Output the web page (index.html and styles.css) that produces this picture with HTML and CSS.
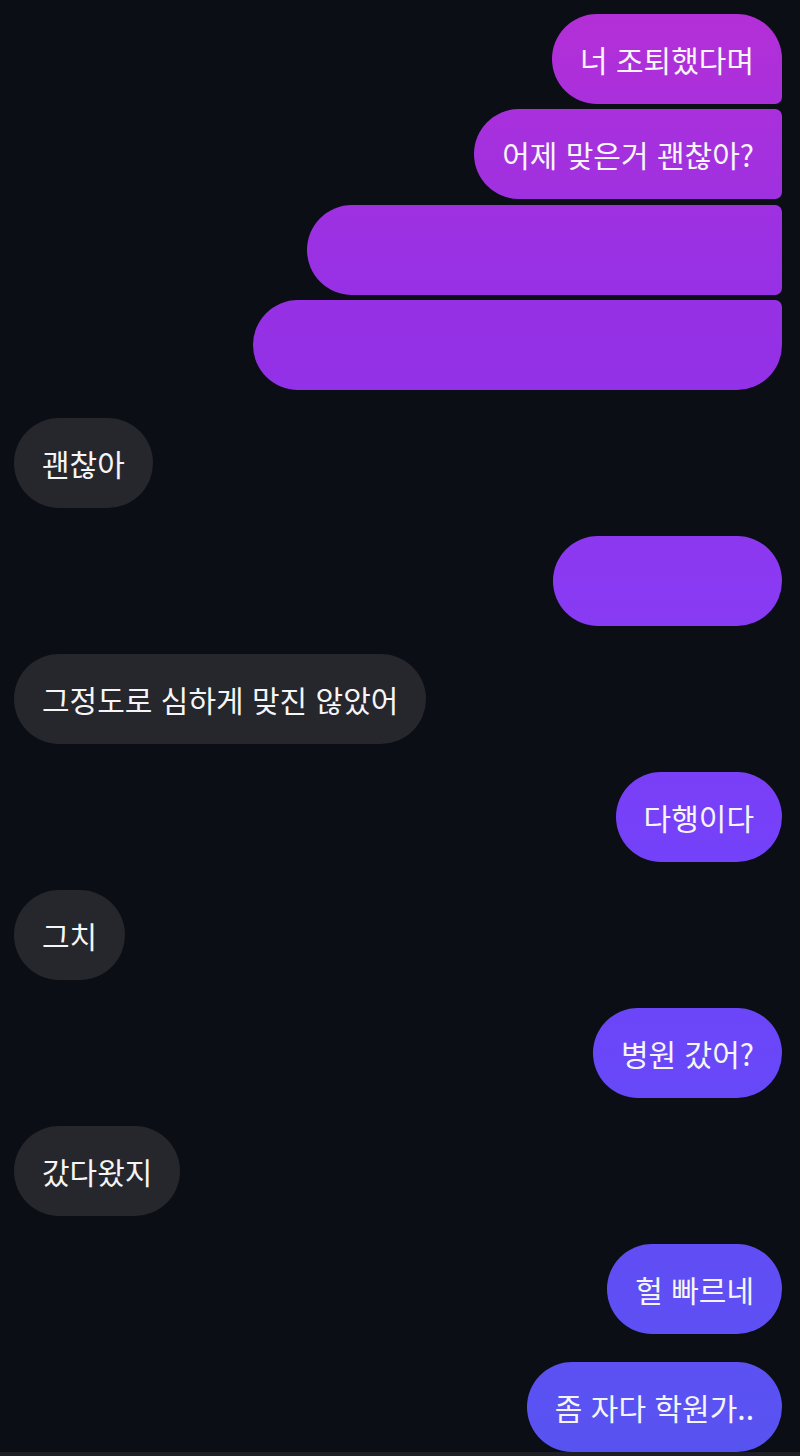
FILE: index.html
```html
<!DOCTYPE html>
<html lang="ko">
<head>
    <meta charset="UTF-8">
    <meta name="viewport" content="width=device-width, initial-scale=1.0">
    <title>채팅</title>
    <link rel="stylesheet" href="styles.css">
</head>
<body>
    <div class="chat">
        <!-- 내가 보낸 메시지 묶음 -->
        <div class="group me">
            <div class="bubble first">너 조퇴했다며</div>
            <div class="bubble middle">어제 맞은거 괜찮아?</div>
            <div class="bubble middle blank-md"></div>
            <div class="bubble last blank-lg"></div>
        </div>

        <div class="group you">
            <div class="bubble">괜찮아</div>
        </div>

        <div class="group me">
            <div class="bubble blank-sm"></div>
        </div>

        <div class="group you">
            <div class="bubble">그정도로 심하게 맞진 않았어</div>
        </div>

        <div class="group me">
            <div class="bubble">다행이다</div>
        </div>

        <div class="group you">
            <div class="bubble">그치</div>
        </div>

        <div class="group me">
            <div class="bubble">병원 갔어?</div>
        </div>

        <div class="group you">
            <div class="bubble">갔다왔지</div>
        </div>

        <div class="group me">
            <div class="bubble">헐 빠르네</div>
        </div>

        <div class="group me">
            <div class="bubble">좀 자다 학원가..</div>
        </div>
    </div>
    <div class="bottom-bar"></div>
</body>
</html>
```

FILE: styles.css
```css
html, body {
    margin: 0;
    padding: 0;
    background: #0b0e14;
}
body {
    width: 800px;
    height: 1456px;
    overflow: hidden;
    font-family: "Noto Sans CJK KR", "Noto Sans", sans-serif;
    color: #f5f5f7;
}
.chat {
    display: flex;
    flex-direction: column;
    gap: 28px;
    padding: 14px 18px 0 14px;
}
.group {
    display: flex;
    flex-direction: column;
    gap: 5.4px;
}
.group.me {
    align-items: flex-end;
}
.group.you {
    align-items: flex-start;
}
.bubble {
    box-sizing: border-box;
    height: 90px;
    line-height: 90px;
    padding: 0 28px;
    font-size: 30px;
    border-radius: 45px;
    white-space: nowrap;
}
.you .bubble {
    background: #25272c;
}
/* 보낸 메시지는 화면 전체에 걸친 그라데이션 */
.me .bubble {
    background: linear-gradient(to bottom, #b52fd6 0%, #9a31e3 17%, #9430e6 24%, #8a3af2 40%, #7441f9 58%, #6848f8 74%, #5a52f2 97%, #5653f0 100%);
    background-attachment: fixed;
}
.me .first {
    border-bottom-right-radius: 7px;
}
.me .middle {
    border-top-right-radius: 7px;
    border-bottom-right-radius: 7px;
}
.me .last {
    border-top-right-radius: 7px;
}
.blank-sm {
    width: 229px;
}
.blank-md {
    width: 475px;
}
.blank-lg {
    width: 529px;
}
.bottom-bar {
    height: 4px;
    background: #1d1f24;
}
```
